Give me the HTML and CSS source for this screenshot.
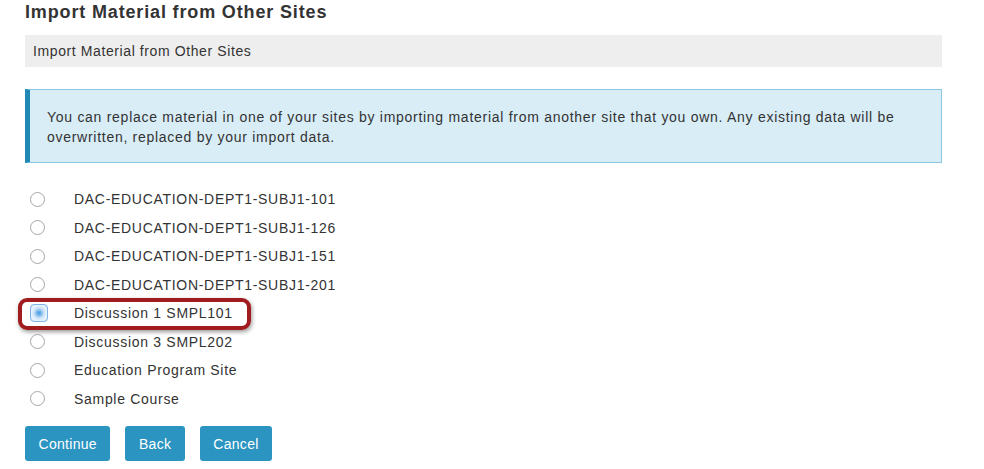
FILE: index.html
```html
<!DOCTYPE html>
<html>
<head>
<meta charset="utf-8">
<link rel="stylesheet" href="styles.css">
</head>
<body>
<div class="page">
  <h1 class="title">Import Material from Other Sites</h1>
  <div class="crumb">Import Material from Other Sites</div>
  <div class="info">You can replace material in one of your sites by importing material from another site that you own. Any existing data will be overwritten, replaced by your import data.</div>
  <ul class="sites">
    <li class="site"><span class="radio"></span><span class="label">DAC-EDUCATION-DEPT1-SUBJ1-101</span></li>
    <li class="site"><span class="radio"></span><span class="label">DAC-EDUCATION-DEPT1-SUBJ1-126</span></li>
    <li class="site"><span class="radio"></span><span class="label">DAC-EDUCATION-DEPT1-SUBJ1-151</span></li>
    <li class="site"><span class="radio"></span><span class="label">DAC-EDUCATION-DEPT1-SUBJ1-201</span></li>
    <li class="site selected"><span class="radio checked"></span><span class="label">Discussion 1 SMPL101</span><span class="highlight"></span></li>
    <li class="site"><span class="radio"></span><span class="label">Discussion 3 SMPL202</span></li>
    <li class="site"><span class="radio"></span><span class="label">Education Program Site</span></li>
    <li class="site"><span class="radio"></span><span class="label">Sample Course</span></li>
  </ul>
  <div class="actions">
    <button class="btn">Continue</button>
    <button class="btn">Back</button>
    <button class="btn">Cancel</button>
  </div>
</div>
</body>
</html>
```

FILE: styles.css
```css
* { box-sizing: border-box; }
html, body { margin: 0; padding: 0; background: #fff; }
body {
  font-family: "Liberation Sans", Arial, sans-serif;
  color: #333;
  font-size: 14px;
  letter-spacing: 0.7px;
}
.page {
  width: 942px;
  padding-left: 25px;
}
.title {
  margin: 0;
  font-size: 18px;
  line-height: 24px;
  font-weight: bold;
  letter-spacing: 0.85px;
  color: #333;
}
.crumb {
  margin-top: 11px;
  height: 32px;
  line-height: 32px;
  background: #eeeeee;
  padding-left: 8px;
  letter-spacing: 0.6px;
  color: #333;
}
.info {
  margin-top: 22px;
  background: #d9edf7;
  border: 1px solid #8cc6e3;
  border-left: 5px solid #2088b5;
  padding: 17px 20px 15px 17px;
  line-height: 20px;
  letter-spacing: 0.72px;
  color: #333;
}
.sites {
  list-style: none;
  margin: 22px 0 0 0;
  padding: 0;
}
.site {
  position: relative;
  height: 28.5px;
  display: flex;
  align-items: center;
}
.radio {
  width: 15px;
  height: 15px;
  margin-left: 5px;
  border: 1px solid #a6a6a6;
  border-radius: 50%;
  background: #fff;
  flex: none;
}
.radio.checked {
  width: 18px;
  height: 18px;
  margin-left: 5px;
  margin-right: -3px;
  border: 1px solid #7eb4ea;
  border-radius: 4px;
  background: radial-gradient(circle at 50% 50%, #4a9de0 0, #6fb3ea 2px, #c9e2f7 5px, #eaf4fd 8px, #d6e9fa 10px);
}
.label {
  margin-left: 29px;
  color: #333;
}
.highlight {
  position: absolute;
  left: -7px;
  top: -1px;
  width: 233px;
  height: 32px;
  border: 4.5px solid #a01c1f;
  border-radius: 9px;
  box-shadow: 1px 2px 4px rgba(0,0,0,0.4);
}
.actions {
  display: flex;
  gap: 15px;
  margin-top: 13px;
}
.btn {
  font-family: "Liberation Sans", Arial, sans-serif;
  font-size: 14px;
  letter-spacing: 0.3px;
  color: #fff;
  background: #2b94c1;
  border: none;
  border-radius: 3px;
  height: 35px;
  padding: 0 13.5px;
}
```
